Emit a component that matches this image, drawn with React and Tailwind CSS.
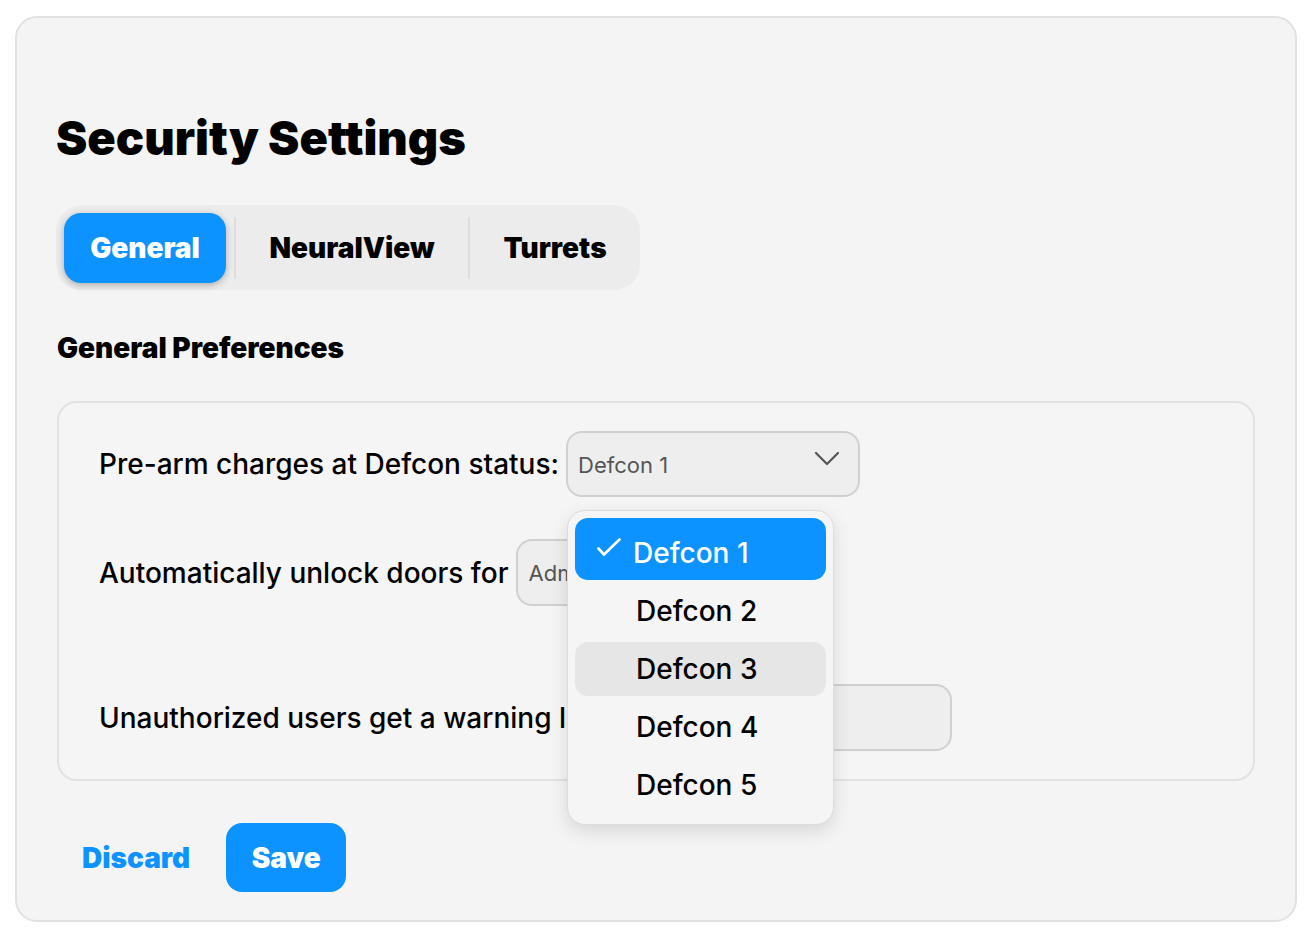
import React from 'react';

const sans = { fontFamily: 'Inter, "Noto Sans", sans-serif' };

const Chevron = () => (
  <svg width="26" height="16" viewBox="0 0 26 16" fill="none" className="text-[#555]">
    <path d="M2 2 L13 13 L24 2" stroke="currentColor" strokeWidth="2.2" strokeLinecap="round" strokeLinejoin="round" />
  </svg>
);

const Check = () => (
  <svg width="24" height="18" viewBox="0 0 24 18" fill="none">
    <path d="M1.5 10.5 L7 16.5 L22.5 1.5" stroke="white" strokeWidth="2.6" strokeLinecap="round" strokeLinejoin="round" />
  </svg>
);

const options = ['Defcon 1', 'Defcon 2', 'Defcon 3', 'Defcon 4', 'Defcon 5'];

const DefconMenu = () => (
  <div className="absolute left-px top-[79px] z-10 w-[267px] h-[315px] rounded-[18px] border border-[#dcdcdc] bg-[#f5f5f5] p-[7px] shadow-[0_6px_18px_rgba(0,0,0,0.12)]">
    {options.map((opt, i) => {
      if (i === 0) {
        return (
          <div key={opt} className="flex h-[62px] items-start rounded-[13px] bg-[#0d93ff] pl-[22px] text-white">
            <span className="mt-[20px]"><Check /></span>
            <span className="ml-[12px] mt-[18px] text-[28px] leading-[34px] font-medium">{opt}</span>
          </div>
        );
      }
      return (
        <div
          key={opt}
          className={
            'mt-[4px] flex h-[54px] items-center rounded-[13px] pl-[61px] text-[28px] font-medium text-black ' +
            (i === 2 ? 'bg-[#e6e6e6]' : '')
          }
        >
          {opt}
        </div>
      );
    })}
  </div>
);

export default function App() {
  return (
    <div className="min-h-screen bg-white pl-[15px] pt-[16px] pr-[13px]" style={sans}>
      <div className="h-[906px] rounded-[22px] border-2 border-[#e1e1e1] bg-[#f4f4f4] pl-[39px] pr-[40px] pt-[96px]">
        <h1 className="text-[47px] leading-[48px] font-black text-black">Security Settings</h1>

        <div className="mt-[43px] flex h-[85px] w-[584px] items-center rounded-[26px] bg-[#ececec] pl-[8px]">
          <button className="h-[70px] w-[162px] rounded-[17px] bg-[#0d93ff] text-[28px] font-black text-white shadow-[0_2px_7px_rgba(0,0,0,0.28)]">
            General
          </button>
          <div className="ml-[8px] h-[62px] w-[2px] bg-[#dddddd]" />
          <button className="h-[70px] w-[232px] text-[28px] font-black text-black">NeuralView</button>
          <div className="h-[62px] w-[2px] bg-[#dddddd]" />
          <button className="h-[70px] w-[170px] text-[28px] font-black text-black">Turrets</button>
        </div>

        <h2 className="mt-[43px] ml-px text-[28px] leading-[30px] font-black text-black">General Preferences</h2>

        <div className="mt-[38px] ml-px rounded-[20px] border-2 border-[#e2e2e2] bg-[#f5f5f5] pl-[40px] pt-[28px] pb-[28px]">
          <div className="flex items-center">
            <span className="text-[28px] font-medium text-black">Pre-arm charges at Defcon status:</span>
            <div className="relative ml-[7px]">
              <div className="flex h-[66px] w-[294px] items-center justify-between rounded-[16px] border-2 border-[#d0d0d0] bg-[#eeeeee] pl-[10px] pr-[18px]">
                <span className="mt-[2px] text-[22px] text-[#555]">Defcon 1</span>
                <span className="-mt-[10px]"><Chevron /></span>
              </div>
              <DefconMenu />
            </div>
          </div>

          <div className="mt-[42px] flex items-center">
            <span className="text-[28px] font-medium text-black">Automatically unlock doors for</span>
            <div className="ml-[8px] flex h-[67px] w-[230px] items-center rounded-[16px] border-2 border-[#d0d0d0] bg-[#eeeeee] pl-[10px]">
              <span className="mt-[2px] text-[22px] text-[#555]">Administrators</span>
            </div>
          </div>

          <div className="mt-[78px] flex w-[853px] items-center">
            <span className="shrink-0 text-[28px] font-medium text-black">Unauthorized users get a warning label</span>
            <div className="ml-[9px] h-[67px] flex-1 rounded-[16px] border-2 border-[#d0d0d0] bg-[#eeeeee]" />
          </div>
        </div>

        <div className="mt-[42px] flex items-center gap-[10px]">
          <button className="h-[69px] px-[26px] text-[28px] font-black text-[#0d93ff]">Discard</button>
          <button className="h-[69px] w-[120px] rounded-[16px] bg-[#0d93ff] text-[28px] font-black text-white">Save</button>
        </div>
      </div>
    </div>
  );
}
